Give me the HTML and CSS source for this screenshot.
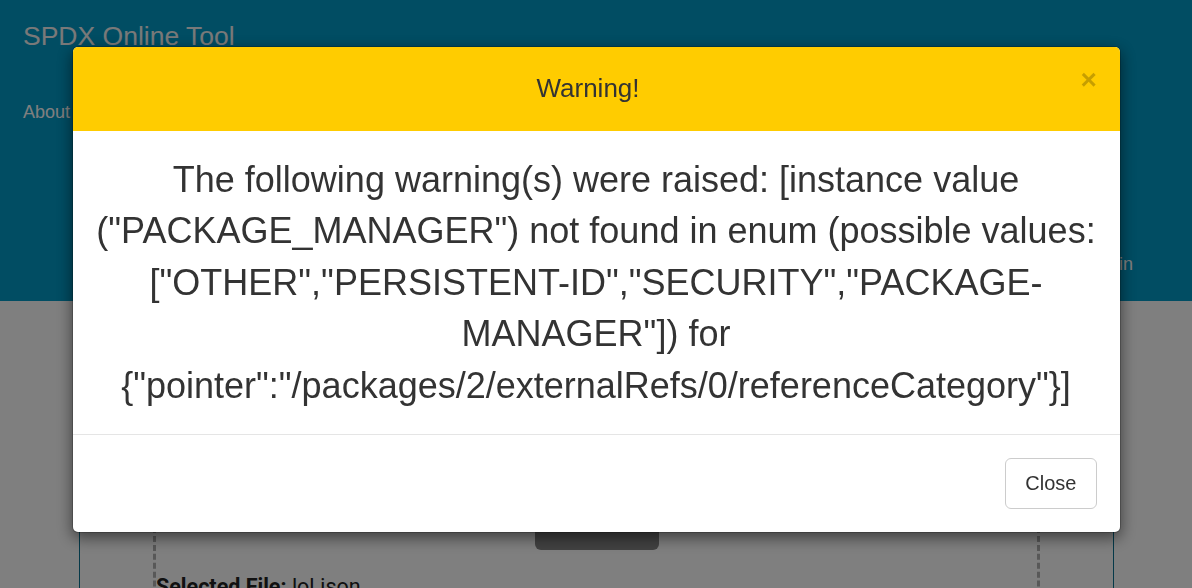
FILE: index.html
```html
<!DOCTYPE html>
<html lang="en">
<head>
<meta charset="utf-8">
<title>SPDX Online Tool</title>
<link rel="stylesheet" href="styles.css">
</head>
<body>
<header class="site-header">
  <div class="brand">SPDX Online Tool</div>
  <nav class="nav-left"><a class="nav-link">About</a></nav>
  <nav class="nav-right"><a class="nav-link">Login</a></nav>
</header>
<main class="main">
  <section class="panel">
    <div class="dropzone">
      <button class="upload-btn">Upload</button>
      <p class="selected"><strong>Selected File:</strong> lol.json</p>
    </div>
  </section>
</main>

<div class="backdrop"></div>
<div class="modal">
  <div class="modal-dialog">
    <div class="modal-header">
      <h4 class="modal-title">Warning!</h4>
      <button class="close" aria-label="Close">&times;</button>
    </div>
    <div class="modal-body">
      <p class="message">The following warning(s) were raised: [instance value ("PACKAGE_MANAGER") not found in enum (possible values: ["OTHER","PERSISTENT-ID","SECURITY","PACKAGE-MANAGER"]) for {"pointer":"/packages/2/externalRefs/0/referenceCategory"}]</p>
    </div>
    <div class="modal-footer">
      <button class="btn">Close</button>
    </div>
  </div>
</div>
</body>
</html>
```

FILE: styles.css
```css
* { box-sizing: border-box; }
html, body {
  margin: 0;
  padding: 0;
  height: 100%;
  overflow: hidden;
}
body {
  font-family: "Liberation Sans", Arial, sans-serif;
  background: #ffffff;
  color: #333333;
}

/* page under the modal */
.site-header {
  height: 301px;
  background: #029ac6;
  padding: 21px 0 0 23px;
  display: flex;
  flex-direction: column;
}
.brand {
  font-size: 26.5px;
  line-height: 30px;
  color: #f2f2f2;
}
.nav-left {
  margin-top: 51px;
}
.nav-link {
  font-size: 18px;
  line-height: 21px;
  color: #ffffff;
}
.nav-right {
  margin-top: 131px;
  display: flex;
  justify-content: flex-end;
  padding-right: 59px;
}

.main {
  padding: 20px 78px 0 79px;
}
.panel {
  border: 1px solid #0a7393;
  border-bottom: 0;
  padding: 18px 73px 0 73px;
  height: 267px;
  overflow: hidden;
}
.dropzone {
  border: 3px dashed #b0b0b0;
  border-bottom: 0;
  padding-top: 143px;
  height: 300px;
  display: flex;
  flex-direction: column;
  align-items: center;
}
.upload-btn {
  flex-shrink: 0;
  width: 124px;
  height: 64px;
  border: none;
  border-radius: 6px;
  background: #848484;
  color: #ffffff;
  font: 16px "Liberation Sans", Arial, sans-serif;
}
.selected {
  flex-shrink: 0;
  align-self: stretch;
  margin: 24px 0 0 0;
  font-family: Roboto, "Liberation Sans", Arial, sans-serif;
  font-size: 21.5px;
  line-height: 25px;
  color: #222222;
}

/* modal */
.backdrop {
  position: fixed;
  inset: 0;
  background: rgba(0, 0, 0, 0.5);
}
.modal {
  position: fixed;
  inset: 0;
}
.modal-dialog {
  width: 1049px;
  margin: 46px auto 0;
  background: #ffffff;
  border: 1px solid rgba(0, 0, 0, 0.2);
  border-radius: 6px;
  box-shadow: 0 5px 15px rgba(0, 0, 0, 0.5);
  background-clip: padding-box;
}
.modal-header {
  display: flex;
  align-items: flex-start;
  background: #ffcc00;
  padding: 23px;
  border-bottom: 1px solid #ffcc00;
  border-radius: 5px 5px 0 0;
}
.modal-title {
  flex: 1;
  margin: 0;
  text-align: center;
  font-size: 26px;
  font-weight: normal;
  line-height: 37px;
  color: #333333;
}
.close {
  margin-top: -4px;
  padding: 0;
  border: 0;
  background: transparent;
  font-family: "Liberation Sans", Arial, sans-serif;
  font-size: 28px;
  font-weight: bold;
  line-height: 1;
  color: #000000;
  opacity: 0.22;
  width: 16px;
}
.modal-body {
  padding: 23px 15px;
}
.message {
  margin: 0;
  text-align: center;
  font-size: 36px;
  line-height: 1.42857;
  color: #333333;
}
.modal-footer {
  display: flex;
  justify-content: flex-end;
  padding: 23px;
  border-top: 1px solid #e5e5e5;
}
.btn {
  padding: 10px 19px;
  border: 1px solid #cccccc;
  border-radius: 6px;
  background: #ffffff;
  color: #333333;
  font-family: "Liberation Sans", Arial, sans-serif;
  font-size: 20px;
  line-height: 1.42857;
}
```
